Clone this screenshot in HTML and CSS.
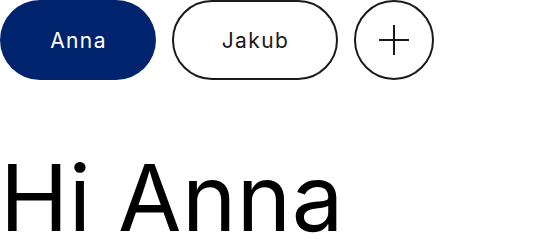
FILE: index.html
```html
<!DOCTYPE html>
<html lang="en">
<head>
<meta charset="utf-8">
<title>Hi Anna</title>
<link rel="stylesheet" href="styles.css">
</head>
<body>
<div class="page">
  <nav class="tabs">
    <button class="pill pill--active" type="button">Anna</button>
    <button class="pill pill--outline" type="button">Jakub</button>
    <button class="pill-add" type="button" aria-label="Add">
      <svg width="30" height="30" viewBox="0 0 30 30" aria-hidden="true">
        <path d="M15 0V30M0 15H30" stroke="#1a1a1a" stroke-width="2" fill="none"/>
      </svg>
    </button>
  </nav>
  <h1 class="greeting">Hi Anna</h1>
</div>
</body>
</html>
```
FILE: styles.css
```css
html, body {
  margin: 0;
  padding: 0;
  background: #ffffff;
}
.page {
  font-family: Inter, "Noto Sans", sans-serif;
  color: #000;
  height: 240px;
  overflow: hidden;
}
.tabs {
  display: flex;
  gap: 16px;
  align-items: center;
}
.pill {
  box-sizing: border-box;
  height: 80px;
  border-radius: 40px;
  font-family: Inter, "Noto Sans", sans-serif;
  font-size: 21px;
  font-weight: 400;
  letter-spacing: 1.4px;
  display: flex;
  align-items: center;
  justify-content: center;
  padding: 0 0 0 1px;
  margin: 0;
  cursor: pointer;
}
.pill--active {
  width: 156px;
  background: #00236e;
  color: #ffffff;
  border: none;
}
.pill--outline {
  width: 166px;
  background: #ffffff;
  color: #1a1a1a;
  border: 2px solid #1a1a1a;
}
.pill-add {
  box-sizing: border-box;
  width: 80px;
  height: 80px;
  border-radius: 50%;
  border: 2px solid #1a1a1a;
  background: #fff;
  display: flex;
  align-items: center;
  justify-content: center;
  padding: 0;
  margin: 0;
}
.greeting {
  margin: 81px 0 0 0;
  font-size: 92px;
  font-weight: 400;
  line-height: 0.8;
  letter-spacing: 0.5px;
}
```
